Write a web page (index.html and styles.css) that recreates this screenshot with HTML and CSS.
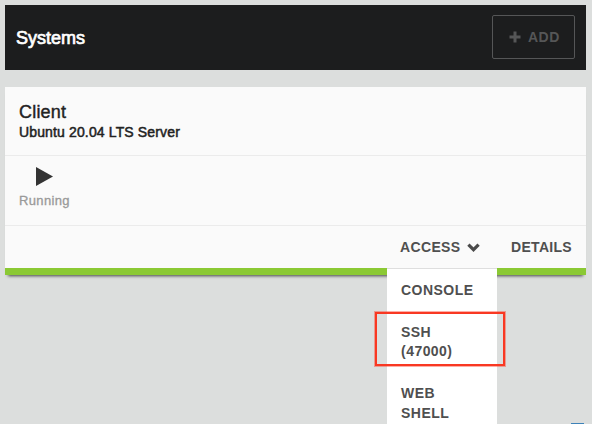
FILE: index.html
```html
<!DOCTYPE html>
<html lang="en">
<head>
<meta charset="utf-8">
<title>Systems</title>
<link rel="stylesheet" href="styles.css">
</head>
<body>
<header class="topbar">
  <h1 class="topbar-title">Systems</h1>
  <button class="add-button" type="button">
    <svg class="add-icon" viewBox="0 0 12 12"><path d="M4.5 .5h3v4h4v3h-4v4h-3v-4h-4v-3h4z"/></svg>
    <span>ADD</span>
  </button>
</header>
<main class="card">
  <section class="card-head">
    <h2 class="name">Client</h2>
    <p class="os">Ubuntu 20.04 LTS Server</p>
  </section>
  <section class="card-status">
    <div class="status">
      <svg class="play" viewBox="0 0 17 19"><path d="M0 0L17 9.5L0 19z"/></svg>
      <span class="status-label">Running</span>
    </div>
  </section>
  <footer class="card-actions">
    <div class="access">
      <span class="action action-access">ACCESS</span>
      <svg class="chevron" viewBox="0 0 13 9"><path d="M1.4 1.7L6.5 6.7L11.6 1.7"/></svg>
      <ul class="menu">
        <li class="item">CONSOLE</li>
        <li class="item">SSH<br>(47000)</li>
        <li class="item">WEB<br>SHELL</li>
      </ul>
      <div class="highlight"></div>
    </div>
    <span class="action action-details">DETAILS</span>
  </footer>
</main>
<div class="chat"></div>
</body>
</html>
```
FILE: styles.css
```css
* { box-sizing: border-box; margin: 0; padding: 0; }
body {
  height: 424px;
  padding: 5px 6px 0 5px;
  overflow: hidden;
  background: #dcdedd;
  font-family: "Liberation Sans", Arial, sans-serif;
  color: #222;
}
.topbar {
  display: flex;
  align-items: center;
  justify-content: space-between;
  height: 65px;
  padding: 0 11px;
  background: #1c1d1e;
}
.topbar-title {
  font-size: 18px;
  font-weight: 400;
  line-height: 24px;
  color: #fff;
  -webkit-text-stroke: .7px #fff;
}
.add-button {
  display: flex;
  align-items: center;
  gap: 7px;
  width: 83px;
  height: 44px;
  margin-bottom: 1px;
  padding: 0 0 0 16px;
  border: 1px solid #555657;
  border-radius: 2px;
  background: none;
  color: #555657;
  font: bold 14px "Liberation Sans", Arial, sans-serif;
  letter-spacing: .5px;
}
.add-icon { width: 12px; height: 12px; fill: #555657; }
.card {
  height: 188px;
  margin-top: 17px;
  background: #fafafa;
  border-bottom: 7px solid #8bc934;
  box-shadow: 0 4px 3px -3px rgba(0, 0, 0, .7);
}
.card-head { height: 69px; padding: 14px 14px 0; border-bottom: 1px solid #ebebeb; }
.name {
  font-size: 18px;
  font-weight: 400;
  line-height: 22px;
  letter-spacing: .2px;
  -webkit-text-stroke: .4px #222;
}
.os {
  font-size: 14px;
  line-height: 18px;
  letter-spacing: .14px;
  -webkit-text-stroke: .5px #222;
}
.card-status { height: 70px; padding: 11px 14px 0; border-bottom: 1px solid #ebebeb; }
.status { display: flex; flex-direction: column; align-items: center; width: 51px; }
.play { width: 17px; height: 19px; fill: #333; }
.status-label {
  margin-top: 7px;
  font-size: 13px;
  line-height: 16px;
  letter-spacing: .35px;
  color: #999;
  -webkit-text-stroke: .3px #999;
}
.card-actions { display: flex; justify-content: flex-end; height: 42px; padding-right: 14px; }
.access { position: relative; display: flex; width: 110px; padding-left: 13px; margin-right: 14px; }
.action { font-size: 14px; font-weight: 700; line-height: 43px; color: #4f4f4f; }
.action-access { letter-spacing: .35px; }
.action-details { letter-spacing: .3px; }
.chevron { width: 13px; height: 9px; margin: 17px 0 0 6px; fill: none; stroke: #4a4a4a; stroke-width: 3.2; }
.menu {
  position: absolute;
  left: 0;
  top: 42px;
  width: 110px;
  height: 170px;
  padding: 12px 0 0 14px;
  border-top: 1px solid #dedede;
  background: #fff;
  list-style: none;
}
.item {
  margin-bottom: 22px;
  font-size: 14px;
  font-weight: 700;
  line-height: 19.7px;
  letter-spacing: .45px;
  color: #4f4f4f;
}
.highlight {
  position: absolute;
  left: -12px;
  top: 86px;
  width: 130px;
  height: 54px;
  border: 2px solid #f93822;
  box-shadow: 0 0 0 1px rgba(249, 56, 34, .4);
}
.chat {
  position: absolute;
  left: 571px;
  top: 423px;
  width: 13px;
  height: 1px;
  background: #3d82b8;
}
```
